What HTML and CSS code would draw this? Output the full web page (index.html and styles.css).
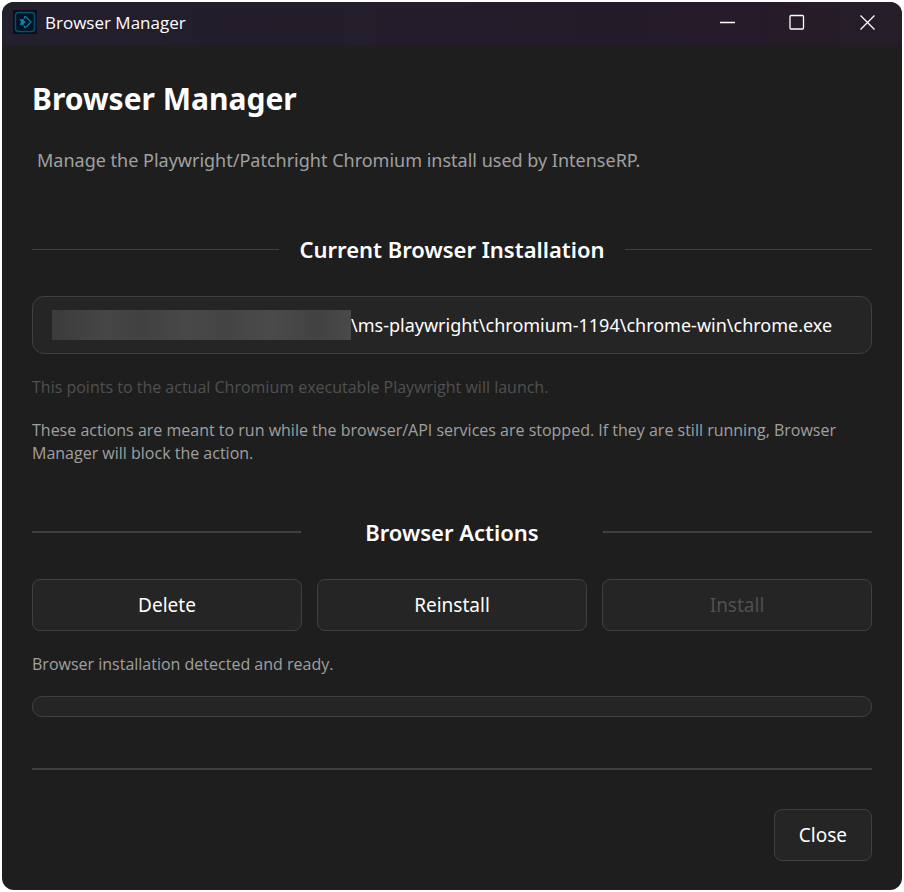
FILE: index.html
```html
<!DOCTYPE html>
<html lang="en">
<head>
<meta charset="utf-8">
<meta name="viewport" content="width=device-width, initial-scale=1">
<title>Browser Manager</title>
<link rel="stylesheet" href="styles.css">
</head>
<body>
<div class="window">
  <header class="titlebar">
    <svg class="app-icon" viewBox="0 0 24 24" aria-hidden="true">
      <rect width="24" height="24" fill="#04101f"/>
      <rect x="2.5" y="2.5" width="19" height="19" rx="3" fill="#021222" stroke="#07506c" stroke-width="1.5"/>
      <path d="M11.500 8.500V6.800h1.500L18 12l-5 5.200h-1.500v-1.700" fill="none" stroke="#0786aa" stroke-width="1.200"/>
      <path d="M6.500 8.800l2 .7L10.500 8.500l.3 2L13 12l-2.200 1.500-.3 2-2-1L6.500 15.200 8 12z" fill="#0786aa"/>
    </svg>
    <span class="titlebar-text">Browser Manager</span>
    <div class="window-controls">
      <button type="button" class="window-button" aria-label="Minimize"><svg viewBox="0 0 16 16"><path d="M1 8.500h15"/></svg></button>
      <button type="button" class="window-button" aria-label="Maximize"><svg viewBox="0 0 16 16"><rect x="1" y="1.500" width="13.500" height="13.500" rx="1"/></svg></button>
      <button type="button" class="window-button" aria-label="Close window"><svg viewBox="0 0 16 16"><path d="M1.500 1.500l14 14M15.500 1.500l-14 14"/></svg></button>
    </div>
  </header>
  <main class="content">
    <h1 class="title">Browser Manager</h1>
    <p class="subtitle">Manage the Playwright/Patchright Chromium install used by IntenseRP.</p>

    <h2 class="section">Current Browser Installation</h2>
    <div class="path-field">
      <span class="redacted"></span>
      <input class="path-input" type="text" readonly aria-label="Browser executable path" value="\ms-playwright\chromium-1194\chrome-win\chrome.exe">
    </div>
    <p class="note hint">This points to the actual Chromium executable Playwright will launch.</p>
    <p class="note">These actions are meant to run while the browser/API services are stopped. If they are still running, Browser Manager will block the action.</p>

    <h2 class="section section-columns">Browser Actions</h2>
    <div class="actions">
      <button type="button" class="button">Delete</button>
      <button type="button" class="button">Reinstall</button>
      <button type="button" class="button" disabled>Install</button>
    </div>
    <p class="note status" id="status">Browser installation detected and ready.</p>
    <div class="progress" role="progressbar" aria-labelledby="status" aria-valuenow="0" aria-valuemin="0" aria-valuemax="100"></div>
    <footer class="footer">
      <button type="button" class="button button-close">Close</button>
    </footer>
  </main>
</div>
</body>
</html>
```
FILE: styles.css
```css
* {
  box-sizing: border-box;
}

body {
  margin: 0;
  padding: 2px;
  background: #fff;
  color: #fff;
  font-family: "Noto Sans", sans-serif;
}

.window {
  min-height: calc(100vh - 4px);
  border-radius: 12px;
  overflow: hidden;
  background: #1e1e1e;
}

.titlebar {
  display: flex;
  align-items: center;
  height: 43px;
  padding-left: 11px;
  background: linear-gradient(90deg, #231f2c, #251b29 80%, #251e28);
}

.app-icon {
  width: 24px;
  height: 24px;
  margin: 0 8px 3px 0;
}

.titlebar-text {
  flex: 1;
  padding-bottom: 2px;
  font-family: "Open Sans", sans-serif;
  font-size: 17px;
  line-height: 24px;
}

.window-controls {
  display: flex;
  align-self: stretch;
}

.window-button {
  width: 70px;
  padding: 0 0 3px;
  border: 0;
  background: none;
}

.window-button svg {
  display: block;
  width: 16px;
  height: 16px;
  margin: 0 auto;
  fill: none;
  stroke: #fff;
  stroke-width: 1.3;
}

.content {
  padding: 32px 30px 28px;
}

.title {
  margin: 0;
  font-size: 30px;
  line-height: 44px;
  font-weight: 700;
}

.subtitle {
  margin: 24px 0 0 5px;
  color: #a0a0a0;
  font-size: 18px;
  line-height: 30px;
}

.section {
  display: flex;
  align-items: center;
  gap: 20px;
  margin: 59px 0 0;
  font-size: 22px;
  line-height: 30px;
  font-weight: 600;
  text-align: center;
}

.section::before,
.section::after {
  content: "";
  flex: 1;
  height: 1px;
  background: #404040;
}

.section-columns {
  display: grid;
  grid-template-columns: repeat(3, 1fr);
  gap: 17px;
  margin-top: 52px;
}

.section-columns::before,
.section-columns::after {
  height: 2px;
}

.path-field {
  display: flex;
  align-items: center;
  height: 58px;
  margin-top: 32px;
  padding: 0 19px;
  border: 1px solid #404040;
  border-radius: 12px;
  background: #252525;
}

.redacted {
  flex: 0 0 299px;
  height: 30px;
  background: linear-gradient(90deg, #3b3b3d, #464646 18%, #414141 30%, #484848 45%, #444 58%, #4b4b4b 73%, #424242 88%, #494949);
}

.path-input {
  flex: 1;
  min-width: 0;
  padding: 0;
  border: 0;
  outline: 0;
  background: none;
  color: #fff;
  font: inherit;
  font-size: 18px;
}

.note {
  margin: 20px 0 0;
  color: #a0a0a0;
  font-family: "Open Sans", sans-serif;
  font-size: 16px;
  line-height: 23px;
}

.hint {
  margin-top: 22px;
  color: #505050;
}

.actions {
  display: grid;
  grid-template-columns: repeat(3, 1fr);
  gap: 15px;
  margin-top: 32px;
}

.button {
  height: 52px;
  padding: 0 24px;
  border: 1px solid #404040;
  border-radius: 8px;
  background: #252525;
  color: #fff;
  font: inherit;
  font-size: 19px;
}

.button:disabled {
  color: #505050;
}

.status {
  margin-top: 22px;
}

.progress {
  height: 21px;
  margin-top: 20px;
  border: 1px solid #404040;
  border-radius: 10px;
  background: #252525;
}

.footer {
  display: flex;
  justify-content: flex-end;
  margin-top: 51px;
  padding-top: 39px;
  border-top: 2px solid #404040;
}
```
